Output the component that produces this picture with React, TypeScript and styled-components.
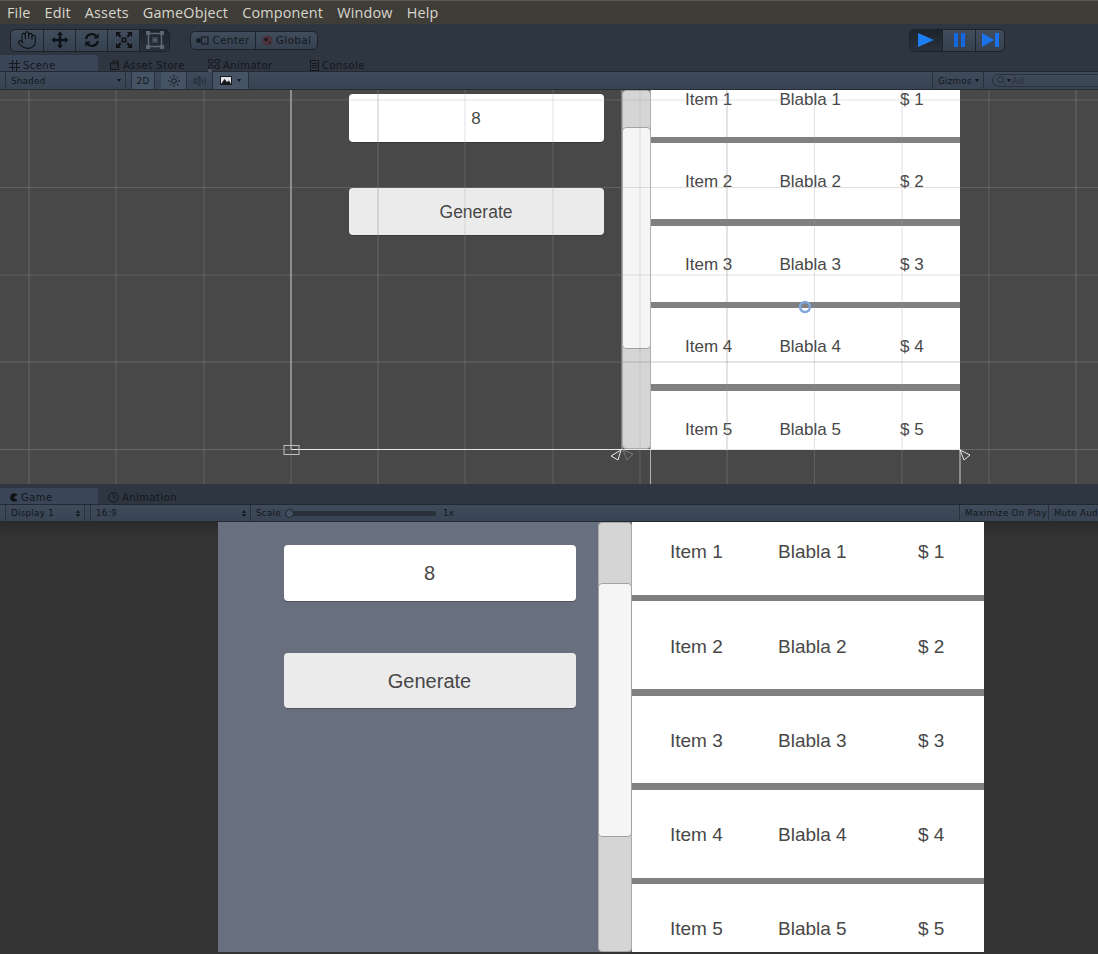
import React from "react";
import styled, { createGlobalStyle } from "styled-components";
import { Hand } from "lucide-react";

const Global = createGlobalStyle`
  html, body { margin: 0; padding: 0; background: #2d3540; }
  * { box-sizing: border-box; }
`;

const Editor = styled.div`
  width: 1098px;
  height: 954px;
  overflow: hidden;
  display: flex;
  flex-direction: column;
  font-family: "DejaVu Sans", sans-serif;
  color: #14171c;
`;

const MenuBar = styled.div`
  height: 24px;
  flex: none;
  display: flex;
  align-items: center;
  gap: 14px;
  padding: 0 7px;
  background: #3f3d38;
  border-top: 1px solid #5b5850;
  font-family: "Open Sans", sans-serif;
  font-size: 14.4px;
  letter-spacing: 0.18px;
  color: #d9d6cc;
`;

const MenuItem = styled.span`
  line-height: 22px;
`;

const ToolBar = styled.div`
  height: 32px;
  flex: none;
  display: flex;
  align-items: center;
  padding: 0 93px 0 10px;
  background: #2e3642;
`;

const ButtonGroup = styled.div<{ $ml?: number; $auto?: boolean }>`
  display: flex;
  margin-left: ${(p) => (p.$auto ? "auto" : `${p.$ml ?? 0}px`)};
  border-radius: 5px;
  border: 1px solid #1d2229;
  overflow: hidden;
  background: linear-gradient(#414c5c, #364150);
`;

const ToolButton = styled.div<{ $w: number; $active?: boolean; $h?: number }>`
  width: ${(p) => p.$w}px;
  height: ${(p) => p.$h ?? 21}px;
  display: flex;
  align-items: center;
  justify-content: center;
  gap: 3px;
  font-size: 10.5px;
  letter-spacing: 0.3px;
  color: #15181d;
  background: ${(p) => (p.$active ? "linear-gradient(#1e242c, #2a313b)" : "transparent")};
  & + & {
    border-left: 1px solid #1f252d;
  }
`;

const TabStrip = styled.div<{ $h: number }>`
  height: ${(p) => p.$h}px;
  flex: none;
  display: flex;
  align-items: flex-end;
  background: #2e3642;
  border-bottom: 1px solid #232932;
`;

const Tab = styled.div<{ $w: number; $active?: boolean; $pl?: number; $pt?: number }>`
  width: ${(p) => p.$w}px;
  height: 16px;
  flex: none;
  display: flex;
  align-items: center;
  gap: 3px;
  padding: ${(p) => p.$pt ?? 2}px 0 0 ${(p) => p.$pl ?? 0}px;
  font-size: 10px;
  letter-spacing: 0.45px;
  color: #14171c;
  background: ${(p) => (p.$active ? "#3a4657" : "transparent")};
  border-top-right-radius: 2px;
`;

const SubBar = styled.div<{ $h: number }>`
  height: ${(p) => p.$h}px;
  flex: none;
  display: flex;
  align-items: stretch;
  background: linear-gradient(#3f4a5b, #384353);
  border-bottom: 1px solid #252b34;
  font-size: 8.7px;
  letter-spacing: 0.3px;
  white-space: nowrap;
  color: #14171c;
`;

const SubCell = styled.div<{ $w?: number; $ml?: number; $light?: boolean; $bl?: boolean; $br?: boolean }>`
  width: ${(p) => (p.$w ? `${p.$w}px` : "auto")};
  margin-left: ${(p) => p.$ml ?? 0}px;
  flex: none;
  display: flex;
  align-items: center;
  justify-content: space-between;
  padding: 0 4px 0 5px;
  background: ${(p) => (p.$light ? "#465365" : "transparent")};
  border-left: ${(p) => (p.$bl ? "1px solid #28303a" : "none")};
  border-right: ${(p) => (p.$br ? "1px solid #28303a" : "none")};
`;

const CenterCell = styled(SubCell)`
  justify-content: center;
  padding: 0;
  gap: 5px;
`;

const Caret = styled.span`
  width: 0;
  height: 0;
  border-left: 2.5px solid transparent;
  border-right: 2.5px solid transparent;
  border-top: 3px solid #14171c;
`;

const Stepper = styled.span`
  display: flex;
  flex-direction: column;
  gap: 1px;
  &::before,
  &::after {
    content: "";
    width: 0;
    height: 0;
    border-left: 2.5px solid transparent;
    border-right: 2.5px solid transparent;
  }
  &::before {
    border-bottom: 3px solid #14171c;
  }
  &::after {
    border-top: 3px solid #14171c;
  }
`;

const Spacer = styled.div`
  flex: 1;
`;

const SearchPill = styled.div`
  width: 112px;
  height: 13px;
  margin: 2px -6px 0 8px;
  flex: none;
  display: flex;
  align-items: center;
  gap: 1px;
  padding-left: 4px;
  border: 1px solid #29303a;
  border-radius: 7px;
  color: #272d36;
  font-size: 9px;
`;

const Slider = styled.div`
  width: 151px;
  height: 5px;
  align-self: center;
  flex: none;
  position: relative;
  background: #283039;
  border-radius: 3px;
`;

const SliderThumb = styled.span`
  position: absolute;
  left: 0;
  top: -2px;
  width: 9px;
  height: 9px;
  border-radius: 50%;
  background: #465365;
  border: 1px solid #1d2229;
`;

const SceneView = styled.div`
  height: 394px;
  flex: none;
  position: relative;
  overflow: hidden;
  background: #484848;
`;

const GameView = styled.div`
  flex: 1;
  min-height: 0;
  padding: 0 0 2px 218px;
  background: linear-gradient(#2a2a2a, #333 14px);
`;

const GridOverlay = styled.svg`
  position: absolute;
  inset: 0;
  pointer-events: none;
`;

const UiRoot = styled.div<{ $w: number; $h: number; $ml: number; $bg: string }>`
  width: ${(p) => p.$w}px;
  height: ${(p) => p.$h}px;
  margin-left: ${(p) => p.$ml}px;
  display: flex;
  background: ${(p) => p.$bg};
`;

const FormColumn = styled.div<{ $m: Metrics }>`
  width: ${(p) => p.$m.form}px;
  flex: none;
  display: flex;
  flex-direction: column;
  gap: ${(p) => p.$m.formGap}px;
  padding: ${(p) => p.$m.formTop}px ${(p) => p.$m.formRight}px 0 ${(p) => p.$m.formLeft}px;
`;

const Field = styled.div<{ $h: number; $fs: number; $muted?: boolean }>`
  height: ${(p) => p.$h}px;
  display: flex;
  align-items: center;
  justify-content: center;
  padding: 1px 1px 0 0;
  border-radius: 4px;
  background: ${(p) => (p.$muted ? "#ebebeb" : "#fff")};
  box-shadow: 0 1px 0 rgba(30, 30, 30, 0.35);
  font-family: "Liberation Sans", sans-serif;
  font-size: ${(p) => p.$fs}px;
  color: #474747;
`;

const Track = styled.div<{ $w: number }>`
  width: ${(p) => p.$w}px;
  flex: none;
  background: #d5d5d5;
  border: 1px solid #a9a9a9;
  border-radius: 4px;
`;

const Thumb = styled.div<{ $top: number; $h: number }>`
  margin: ${(p) => p.$top}px -1px 0;
  height: ${(p) => p.$h}px;
  background: #f5f5f5;
  border: 1px solid #a2a2a2;
  border-radius: 4px;
`;

const ListViewport = styled.div`
  flex: 1;
  min-width: 0;
  overflow: hidden;
  background: #fff;
`;

const ListInner = styled.div<{ $offset: number }>`
  margin-top: ${(p) => p.$offset}px;
`;

const Row = styled.div<{ $m: Metrics }>`
  height: ${(p) => p.$m.row}px;
  display: grid;
  grid-template-columns: ${(p) => p.$m.colA}px ${(p) => p.$m.colB}px 1fr;
  align-items: center;
  padding: ${(p) => p.$m.rowTop}px 0 0 ${(p) => p.$m.pad}px;
  font-family: "Liberation Sans", sans-serif;
  font-size: ${(p) => p.$m.text}px;
  color: #484848;
  white-space: nowrap;
`;

const Divider = styled.div<{ $h: number }>`
  height: ${(p) => p.$h}px;
  background: #808080;
`;

const Gizmo = styled.svg<{ $x: number; $y: number }>`
  position: absolute;
  left: ${(p) => p.$x}px;
  top: ${(p) => p.$y}px;
  overflow: visible;
  pointer-events: none;
`;

type Metrics = {
  form: number; formGap: number; formTop: number; formLeft: number; formRight: number;
  inputH: number; buttonH: number; inputFs: number; buttonFs: number;
  track: number; thumbTop: number; thumbH: number;
  offset: number; row: number; rowTop: number; sep: number; pad: number; colA: number; colB: number; text: number;
};

const sceneMetrics: Metrics = {
  form: 331, formGap: 46, formTop: 4, formLeft: 58, formRight: 18,
  inputH: 48, buttonH: 47, inputFs: 17, buttonFs: 17.5,
  track: 29, thumbTop: 36, thumbH: 222,
  offset: -29, row: 76, rowTop: 2, sep: 6.4, pad: 34, colA: 94.5, colB: 120.5, text: 17,
};

const gameMetrics: Metrics = {
  form: 380, formGap: 52, formTop: 23, formLeft: 66, formRight: 22,
  inputH: 56, buttonH: 55, inputFs: 20, buttonFs: 20,
  track: 34, thumbTop: 60, thumbH: 254,
  offset: -15, row: 87.7, rowTop: 3, sep: 6.6, pad: 38, colA: 108, colB: 140, text: 19,
};

const items = [1, 2, 3, 4, 5];

function UiMock({ m, w, h, ml, bg }: { m: Metrics; w: number; h: number; ml: number; bg: string }) {
  return (
    <UiRoot $w={w} $h={h} $ml={ml} $bg={bg}>
      <FormColumn $m={m}>
        <Field $h={m.inputH} $fs={m.inputFs}>8</Field>
        <Field $h={m.buttonH} $fs={m.buttonFs} $muted>Generate</Field>
      </FormColumn>
      <Track $w={m.track}>
        <Thumb $top={m.thumbTop} $h={m.thumbH} />
      </Track>
      <ListViewport>
        <ListInner $offset={m.offset}>
          {items.map((n) => (
            <React.Fragment key={n}>
              <Row $m={m}>
                <span>Item {n}</span>
                <span>Blabla {n}</span>
                <span>$ {n}</span>
              </Row>
              {n < 5 && <Divider $h={m.sep} />}
            </React.Fragment>
          ))}
        </ListInner>
      </ListViewport>
    </UiRoot>
  );
}

const gridX = [29, 116, 204, 291, 378, 465, 553, 640, 727, 814.5, 902, 989, 1076];
const gridY = [{ y: 10, s: false }, { y: 97.5, s: false }, { y: 185, s: false }, { y: 272, s: true }, { y: 359.5, s: true }];

function Grid() {
  return (
    <GridOverlay width={1098} height={394}>
      {gridX.map((x, i) => (
        <line
          key={x}
          x1={x}
          x2={x}
          y1={0}
          y2={394}
          stroke={i % 4 === 0 ? "#8b8b8b" : "#989898"}
          strokeOpacity={i % 4 === 0 ? 0.47 : 0.3}
        />
      ))}
      {gridY.map(({ y, s }) => (
        <line key={y} x1={0} x2={1098} y1={y} y2={y} stroke={s ? "#8b8b8b" : "#989898"} strokeOpacity={s ? 0.47 : 0.3} />
      ))}
      <line x1={291} x2={291} y1={0} y2={359} stroke="#a6a6a6" strokeWidth={1.4} />
      <line x1={622} x2={622} y1={0} y2={359} stroke="#b0b0b0" />
      <line x1={650.5} x2={650.5} y1={0} y2={394} stroke="#b0b0b0" />
      <line x1={960} x2={960} y1={359} y2={394} stroke="#d0d0d0" />
      <line x1={291} x2={960} y1={359.5} y2={359.5} stroke="#e8e8e8" />
      <rect x={284} y={355.5} width={15} height={9} fill="none" stroke="#c0c0c0" />
    </GridOverlay>
  );
}

const PivotCircle = () => (
  <Gizmo $x={799} $y={211} width={12} height={12}>
    <circle cx={6} cy={6} r={5} fill="none" stroke="#7fa6de" strokeWidth={2.4} />
  </Gizmo>
);

const Handle = ({ x, y, points, color }: { x: number; y: number; points: string; color: string }) => (
  <Gizmo $x={x} $y={y} width={13} height={13}>
    <polygon points={points} fill="none" stroke={color} />
  </Gizmo>
);

const MoveIcon = () => (
  <svg width="18" height="18" viewBox="0 0 18 18" fill="#0e1115">
    <path d="M9 0.5 12 4H10.2V7.8H14V6l3.5 3L14 12v-1.8H10.2V14H12L9 17.5 6 14h1.8V10.2H4V12L.5 9 4 6v1.8h3.8V4H6z" />
  </svg>
);

const RotateIcon = () => (
  <svg width="16" height="16" viewBox="0 0 16 16" fill="none" stroke="#0e1115" strokeWidth="2.2">
    <path d="M2 7a6 6 0 0 1 10.2-3" />
    <path d="M14 9a6 6 0 0 1-10.2 3" />
    <path d="M14.6 1.2v5.2H9.4z" fill="#0e1115" stroke="none" />
    <path d="M1.4 14.8V9.6h5.2z" fill="#0e1115" stroke="none" />
  </svg>
);

const ScaleIcon = () => (
  <svg width="18" height="18" viewBox="0 0 18 18" fill="#0e1115">
    <path d="M6.500 6.500h5v5h-5zM8 8v2h2V8z" fillRule="evenodd" />
    <path d="M1 1h5L4.300 2.700 6.500 4.900 4.900 6.500 2.700 4.300 1 6z" />
    <path d="M17 1v5L15.300 4.300 13.100 6.500 11.500 4.900 13.700 2.700 12 1z" />
    <path d="M1 17v-5l1.700 1.700 2.200-2.200 1.600 1.600-2.200 2.200L6 17z" />
    <path d="M17 17h-5l1.700-1.700-2.200-2.200 1.600-1.600 2.200 2.200L17 12z" />
  </svg>
);

const RectIcon = () => (
  <svg width="20" height="20" viewBox="0 0 20 20" fill="#5d6673">
    <rect x="3.500" y="3.500" width="13" height="13" fill="none" stroke="#5d6673" strokeWidth="1.600" />
    <rect x="7" y="7" width="6" height="6" fill="#3a4351" />
    <circle cx="10" cy="10" r="1.600" />
    <rect x="1" y="1" width="4" height="4" />
    <rect x="15" y="1" width="4" height="4" />
    <rect x="1" y="15" width="4" height="4" />
    <rect x="15" y="15" width="4" height="4" />
  </svg>
);

const CenterIcon = () => (
  <svg width="13" height="9" viewBox="0 0 13 9">
    <rect x="0.500" y="2.500" width="4" height="4" fill="#14171c" />
    <rect x="5.500" y="1" width="6.500" height="7" fill="none" stroke="#14171c" />
  </svg>
);

const GlobeIcon = () => (
  <svg width="11" height="11" viewBox="0 0 11 11">
    <circle cx="5.500" cy="5.500" r="5" fill="#4a3238" />
    <path d="M2 3.500h4L5 6 3 6zM7 7l2-.5L8 9z" fill="#14171c" />
  </svg>
);

const PlayIcon = () => (
  <svg width="18" height="14" viewBox="0 0 18 14"><path d="M1 0 17 7 1 14z" fill="#1d7df2" /></svg>
);
const PauseIcon = () => (
  <svg width="11" height="14" viewBox="0 0 11 14" fill="#1668e0"><rect width="4" height="14" /><rect x="7" width="4" height="14" /></svg>
);
const StepIcon = () => (
  <svg width="17" height="14" viewBox="0 0 17 14" fill="#1a73ea"><path d="M0 0 12 7 0 14z" /><rect x="13" width="4" height="14" /></svg>
);

const GridTabIcon = () => (
  <svg width="11" height="11" viewBox="0 0 11 11" stroke="#14171c" fill="none">
    <path d="M3.500 0v11M7.500 0v11M0 3.500h11M0 7.500h11" />
  </svg>
);
const BagIcon = () => (
  <svg width="10" height="10" viewBox="0 0 10 10" fill="none" stroke="#14171c">
    <rect x="0.500" y="3" width="8" height="6.500" fill="#2a313b" />
    <path d="M3 3V1h5v5" />
  </svg>
);
const NodesIcon = () => (
  <svg width="12" height="13" viewBox="0 0 12 13" fill="none" stroke="#14171c">
    <rect x="0.500" y="0.500" width="4.500" height="3.500" rx="1.500" />
    <rect x="7" y="0.500" width="4.500" height="3.500" rx="1.500" />
    <rect x="7" y="6" width="4.500" height="3.500" rx="1.500" />
    <rect x="0.500" y="6" width="4.500" height="3.500" rx="1.500" />
    <path d="M0.500 10l3 3M3.500 10l-3 3" stroke="#6d7683" />
  </svg>
);
const ConsoleIcon = () => (
  <svg width="9" height="11" viewBox="0 0 9 11" fill="none" stroke="#14171c">
    <rect x="0.500" y="0.500" width="8" height="10" />
    <path d="M2 3.500h5M2 5.500h5M2 7.500h5" />
  </svg>
);
const PacIcon = () => (
  <svg width="9" height="9" viewBox="0 0 9 9"><path d="M8.500 1.700A4.300 4.300 0 1 0 8.500 7.300L4.500 4.500z" fill="#0f1216" /></svg>
);
const ClockIcon = () => (
  <svg width="11" height="11" viewBox="0 0 11 11" fill="none" stroke="#14171c">
    <circle cx="5.500" cy="5.500" r="4.800" />
    <path d="M5.500 2.500v3h2.500" />
  </svg>
);
const SunIcon = () => (
  <svg width="12" height="12" viewBox="0 0 12 12" fill="none" stroke="#14171c">
    <circle cx="6" cy="6" r="2.300" />
    <path d="M6 0v2M6 10v2M0 6h2M10 6h2M1.700 1.700l1.400 1.400M8.900 8.900l1.400 1.400M1.700 10.300l1.400-1.400M8.900 3.100l1.400-1.400" />
  </svg>
);
const SpeakerIcon = () => (
  <svg width="14" height="12" viewBox="0 0 14 12" fill="none" stroke="#273039">
    <path d="M1 4h2.500L7 1v10L3.500 8H1z" fill="#323b48" />
    <path d="M9 3.500a4 4 0 0 1 0 5M11 2a6 6 0 0 1 0 8" />
  </svg>
);
const ImageIcon = () => (
  <svg width="12" height="9" viewBox="0 0 12 9">
    <rect x="0.500" y="0.500" width="11" height="8" fill="#dfe3e8" stroke="#14171c" />
    <path d="M1 8 4.500 3 7 6l2-1.500L11 8z" fill="#14171c" />
  </svg>
);
const LensIcon = () => (
  <svg width="9" height="9" viewBox="0 0 9 9" fill="none" stroke="#232932">
    <circle cx="3.500" cy="3.500" r="2.800" />
    <path d="M5.500 5.500 8.500 8.500" />
  </svg>
);

const menu = ["File", "Edit", "Assets", "GameObject", "Component", "Window", "Help"];

export default function App() {
  return (
    <Editor>
      <Global />
      <MenuBar>
        {menu.map((m) => (
          <MenuItem key={m}>{m}</MenuItem>
        ))}
      </MenuBar>

      <ToolBar>
        <ButtonGroup>
          <ToolButton $w={32}><Hand size={20} color="#0e1115" strokeWidth={1.3} /></ToolButton>
          <ToolButton $w={32}><MoveIcon /></ToolButton>
          <ToolButton $w={32}><RotateIcon /></ToolButton>
          <ToolButton $w={32}><ScaleIcon /></ToolButton>
          <ToolButton $w={30} $active><RectIcon /></ToolButton>
        </ButtonGroup>
        <ButtonGroup $ml={20}>
          <ToolButton $w={64} $h={17}><CenterIcon />Center</ToolButton>
          <ToolButton $w={62} $h={17}><GlobeIcon />Global</ToolButton>
        </ButtonGroup>
        <ButtonGroup $auto>
          <ToolButton $w={32} $active><PlayIcon /></ToolButton>
          <ToolButton $w={33}><PauseIcon /></ToolButton>
          <ToolButton $w={29}><StepIcon /></ToolButton>
        </ButtonGroup>
      </ToolBar>

      <TabStrip $h={16}>
        <Tab $w={98} $pl={9} $pt={4} $active><GridTabIcon />Scene</Tab>
        <Tab $w={12} />
        <Tab $w={98} $pt={4}><BagIcon />Asset Store</Tab>
        <Tab $w={102} $pt={4}><NodesIcon />Animator</Tab>
        <Tab $w={100} $pt={4}><ConsoleIcon />Console</Tab>
      </TabStrip>

      <SubBar $h={18}>
        <SubCell $w={121} $ml={5} $bl $br>Shaded<Caret /></SubCell>
        <CenterCell $w={24} $ml={5} $light $bl $br>2D</CenterCell>
        <CenterCell $w={25} $ml={6} $light><SunIcon /></CenterCell>
        <CenterCell $w={26} $bl><SpeakerIcon /></CenterCell>
        <CenterCell $w={37} $light $bl $br><ImageIcon /><Caret /></CenterCell>
        <Spacer />
        <SubCell $w={52} $bl $br>Gizmos<Caret /></SubCell>
        <SearchPill><LensIcon /><Caret />All</SearchPill>
      </SubBar>

      <SceneView>
        <UiMock m={sceneMetrics} w={669} h={359} ml={291} bg="transparent" />
        <Grid />
        <PivotCircle />
        <Handle x={610} y={359} points="11,1 1,7 8,11" color="#e8e8e8" />
        <Handle x={622} y={359} points="1,1 11,5 5,11" color="#7a7a7a" />
        <Handle x={959} y={359} points="1,1 11,6 5,11" color="#e8e8e8" />
      </SceneView>

      <TabStrip $h={21}>
        <Tab $w={98} $pl={9} $active><PacIcon />Game</Tab>
        <Tab $w={10} />
        <Tab $w={100}><ClockIcon />Animation</Tab>
      </TabStrip>

      <SubBar $h={17}>
        <SubCell $w={80} $ml={5} $bl $br>Display 1<Stepper /></SubCell>
        <SubCell $w={161} $ml={5} $bl $br>16:9<Stepper /></SubCell>
        <SubCell $w={34}>Scale</SubCell>
        <Slider><SliderThumb /></Slider>
        <SubCell $ml={2}>1x</SubCell>
        <Spacer />
        <SubCell $w={90} $bl $br>Maximize On Play</SubCell>
        <SubCell $w={49}>Mute Audio</SubCell>
      </SubBar>

      <GameView>
        <UiMock m={gameMetrics} w={766} h={430} ml={0} bg="#686f7e" />
      </GameView>
    </Editor>
  );
}
